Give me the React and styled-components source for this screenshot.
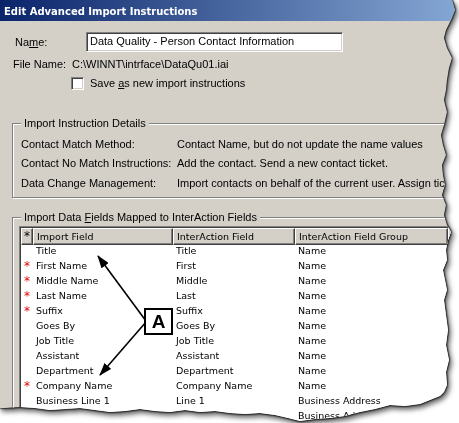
import React from 'react'
import styled, { createGlobalStyle } from 'styled-components'

const GlobalStyle = createGlobalStyle`
  html, body { margin:0; padding:0; background:#fff; }
  body { font-family:"Liberation Sans", Arial, sans-serif; }
`

// torn paper outline of the screenshot (right edge going down, then bottom going left)
const rightEdge = [
  [452,0],[455,10],[451,20],[446,30],[444,38],[447,48],[452,58],[449,68],[447,80],[446,90],
  [444,100],[447,112],[444,125],[441,135],[443,145],[446,155],[442,165],[443,175],[445,185],
  [442,195],[446,205],[444,215],[447,225],[451,232],[448,240],[446,250],[447,260],[443,270],
  [445,280],[447,290],[444,300],[446,315],[448,330],[446,345],[449,360],[446,372],[447,385],[444,392],
]
const bottomEdge = [
  [440,396],[430,400],[420,404],[405,406],[390,405],[375,409],[360,412],[345,416],[330,418],
  [315,419],[300,421],[288,418],[275,415],[260,413],[245,414],[230,413],[215,411],[200,412],
  [185,410],[170,412],[155,411],[140,409],[125,411],[110,412],[95,410],[80,408],[65,409],
  [50,410],[35,408],[20,407],[5,408],[0,408],
]
const tear = [[0,0], ...rightEdge, ...bottomEdge]
  .map(([x, y]) => `${x}px ${y}px`).join(', ')

const Page = styled.div`
  width:459px;
  height:423px;
  overflow:hidden;
  filter:drop-shadow(0 0 0.8px #000) drop-shadow(0 0 0.7px #000) drop-shadow(2px 3px 2.5px rgba(0,0,0,.6));
`
const Window = styled.div`
  position:relative;
  width:470px;
  height:430px;
  background:#d4d0c8;
  clip-path:polygon(${tear});
  font-size:11px;
  color:#000;
`
const TitleBar = styled.div`
  height:21px;
  box-sizing:border-box;
  padding:2px 0 0 4px;
  display:flex;
  align-items:center;
  background:linear-gradient(90deg, #0a246a 0, #a6caf0 580px);
  color:#fff;
  font-family:"DejaVu Sans", Verdana, sans-serif;
  font-weight:bold;
  font-size:10px;
`
const Row = styled.div`
  display:flex;
  align-items:center;
  height:${p => p.$h || 14}px;
  margin-top:${p => p.$top}px;
  padding-left:${p => p.$left}px;
  white-space:nowrap;
`
const Label = styled.span`
  width:${p => p.$w}px;
  flex:none;
`
const TextBox = styled.div`
  width:257px;
  height:20px;
  box-sizing:border-box;
  padding-left:3px;
  line-height:16px;
  background:#fff;
  border:1px solid;
  border-color:#808080 #fff #fff #808080;
  box-shadow:inset 1px 1px 0 #404040, inset -1px -1px 0 #d4d0c8;
`
const Check = styled.span`
  width:13px;
  height:13px;
  box-sizing:border-box;
  margin-right:6px;
  background:#fff;
  border:1px solid;
  border-color:#808080 #fff #fff #808080;
  box-shadow:inset 1px 1px 0 #404040, inset -1px -1px 0 #d4d0c8;
`
const GroupBox = styled.div`
  position:relative;
  margin:${p => p.$top}px 0 0 12px;
  width:460px;
  border:1px solid #808080;
  box-shadow:inset 1px 1px 0 #fff, 1px 1px 0 #fff;
  padding:${p => p.$pad};
`
const GroupTitle = styled.span`
  position:absolute;
  top:-8px;
  left:8px;
  padding:0 3px;
  line-height:14px;
  background:#d4d0c8;
  white-space:nowrap;
`
const DetailRow = styled.div`
  display:flex;
  align-items:center;
  height:19.5px;
  white-space:nowrap;
`
const TableFrame = styled.div`
  border-top:1px solid #808080;
  border-left:1px solid #808080;
`
const Grid = styled.div`
  display:grid;
  grid-template-columns:12px 140px 122px 153px 120px;
  grid-auto-rows:15px;
  background:#fff;
  border-top:1px solid #404040;
  border-left:1px solid #404040;
  font-family:"DejaVu Sans", Verdana, sans-serif;
  font-size:9.5px;
`
const HeadCell = styled.div`
  height:17px;
  box-sizing:border-box;
  padding-left:${p => p.$center ? 0 : 3}px;
  display:flex;
  align-items:center;
  justify-content:${p => p.$center ? 'center' : 'flex-start'};
  background:#d4d0c8;
  border:1px solid;
  border-color:#fff #404040 #404040 #fff;
  box-shadow:inset -1px -1px 0 #808080;
  white-space:nowrap;
  overflow:hidden;
  font-size:${p => p.$center ? 12 : 9.5}px;
`
const Cell = styled.div`
  display:flex;
  align-items:center;
  padding-left:${p => p.$pad ?? 3}px;
  white-space:nowrap;
  overflow:hidden;
`
const Star = styled.div`
  display:flex;
  align-items:center;
  justify-content:center;
  color:#e00000;
  font-size:12px;
  padding-top:1px;
`
const Arrows = styled.svg`
  position:absolute;
  left:0;
  top:0;
  pointer-events:none;
`
const Callout = styled.div`
  position:absolute;
  left:144px;
  top:308px;
  width:29px;
  height:27px;
  box-sizing:border-box;
  border:2.5px solid #000;
  background:#fff;
  display:flex;
  align-items:center;
  justify-content:center;
  font-family:"Liberation Sans", Arial, sans-serif;
  font-weight:bold;
  font-size:19px;
`

const fields = [
  ['', 'Title', 'Title', 'Name', 'Title'],
  ['*', 'First Name', 'First', 'Name', ''],
  ['*', 'Middle Name', 'Middle', 'Name', ''],
  ['*', 'Last Name', 'Last', 'Name', 'Last'],
  ['*', 'Suffix', 'Suffix', 'Name', ''],
  ['', 'Goes By', 'Goes By', 'Name', ''],
  ['', 'Job Title', 'Job Title', 'Name', ''],
  ['', 'Assistant', 'Assistant', 'Name', ''],
  ['', 'Department', 'Department', 'Name', ''],
  ['*', 'Company Name', 'Company Name', 'Name', ''],
  ['', 'Business Line 1', 'Line 1', 'Business Address', ''],
  ['', 'Business Line 2', 'Line 2', 'Business Address', ''],
]

const details = [
  ['Contact Match Method:', 'Contact Name, but do not update the name values'],
  ['Contact No Match Instructions:', 'Add the contact. Send a new contact ticket.'],
  ['Data Change Management:', 'Import contacts on behalf of the current user. Assign tickets to the current user.'],
]

const App = () => {
  return (
    <Page>
      <GlobalStyle />
      <Window>
        <TitleBar>Edit Advanced Import Instructions</TitleBar>

        <Row $top={11} $left={15} $h={20}>
          <Label $w={71}>Na<u>m</u>e:</Label>
          <TextBox>Data Quality - Person Contact Information</TextBox>
        </Row>
        <Row $top={5} $left={13}>
          <Label $w={59}>File Name:</Label>
          C:\WINNT\intrface\DataQu01.iai
        </Row>
        <Row $top={5} $left={71}>
          <Check />
          <span>Save <u>a</u>s new import instructions</span>
        </Row>

        <GroupBox $top={33} $pad="10px 0 4px 8px">
          <GroupTitle>Import Instruction Details</GroupTitle>
          {details.map(([k, v]) => (
            <DetailRow key={k}>
              <Label $w={156}>{k}</Label>
              {v}
            </DetailRow>
          ))}
        </GroupBox>

        <GroupBox $top={19} $pad="8px 0 40px 6px">
          <GroupTitle>Import Data <u>F</u>ields Mapped to InterAction Fields</GroupTitle>
          <TableFrame>
            <Grid>
              <HeadCell $center>*</HeadCell>
              <HeadCell>Import Field</HeadCell>
              <HeadCell>InterAction Field</HeadCell>
              <HeadCell>InterAction Field Group</HeadCell>
              <HeadCell>Default Value</HeadCell>
              {fields.map(([req, imp, ia, grp, def]) => (
                <React.Fragment key={imp}>
                  <Star>{req}</Star>
                  <Cell>{imp}</Cell>
                  <Cell>{ia}</Cell>
                  <Cell>{grp}</Cell>
                  <Cell $pad={2}>{def}</Cell>
                </React.Fragment>
              ))}
            </Grid>
          </TableFrame>
        </GroupBox>

        <Arrows width="470" height="430">
          <defs>
            <marker id="head" markerWidth="13" markerHeight="9" refX="12" refY="4.5" orient="auto" markerUnits="userSpaceOnUse">
              <path d="M0,0 L13,4.5 L0,9 z" fill="#000" />
            </marker>
          </defs>
          <line x1="146" y1="321" x2="98" y2="256" stroke="#000" strokeWidth="1.6" markerEnd="url(#head)" />
          <line x1="146" y1="322" x2="100" y2="375" stroke="#000" strokeWidth="1.6" markerEnd="url(#head)" />
        </Arrows>
        <Callout>A</Callout>
      </Window>
    </Page>
  )
}

export default App
